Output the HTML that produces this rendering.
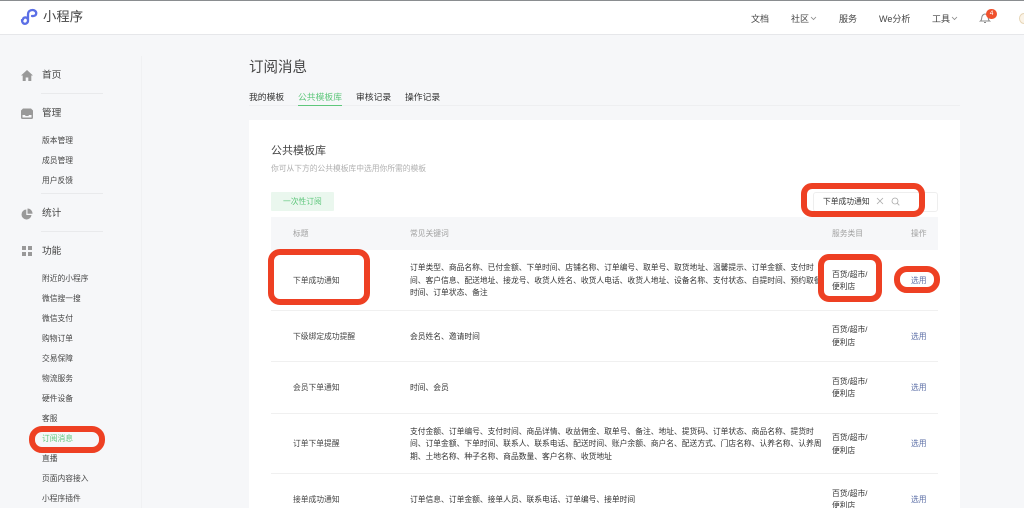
<!DOCTYPE html>
<html lang="zh"><head><meta charset="utf-8"><title>订阅消息</title>
<style>
*{box-sizing:border-box}
html{margin:0;padding:0;background:#f6f7f9;width:1024px;height:508px;overflow:hidden}
body{margin:0;padding:0;width:1024px;height:508px;overflow:hidden;position:relative;background:#f6f7f9;font-family:"Liberation Sans","Noto Sans CJK SC",sans-serif;color:#353535;filter:blur(.3px)}
.a{position:absolute}
.t{position:absolute;white-space:nowrap;line-height:12px;height:12px;margin-top:1px}
.s{font-size:7.75px;color:#444}
.m{font-size:9.7px;color:#444}
.n{font-size:9px;color:#444}
.k{font-size:7.78px;color:#333;left:410px}
.c{font-size:7.78px;color:#333;left:832px}
.o{font-size:7.78px;color:#5b6ea6;left:911px}
.l{font-size:7.78px;color:#444;left:293px}
.h{font-size:7.78px;color:#a0a0a0}
.r{position:absolute;border:6px solid #ee4023;background:transparent}
.d{position:absolute;left:41px;width:62px;height:1px;background:#e9eaec}
.b{position:absolute;left:271px;width:667px;height:1px;background:#f0f0f0}
</style></head><body>
<div class="a" style="left:0;top:0;width:1024px;height:35px;background:#fff;border-top:1px solid #8a8d90;border-bottom:1px solid #e6e7ea"></div>
<svg class="a" style="left:20px;top:8px" width="20" height="18" viewBox="0 0 20 18"><path d="M3 11.500C3 8.800 7.500 8.500 8 12c.3 2.500-1.500 3.800-3 3.800C3 15.800 2 14 2 12M8 12V6.500C8 3.500 10 2 12.500 2c2.500 0 4 2 3.700 3.600C16 7.500 14 8.300 12 8" fill="none" stroke="#5b6fe6" stroke-width="2.300" stroke-linecap="round"/></svg>
<div class="t" style="left:43px;top:10px;font-size:13.300px;color:#444;letter-spacing:.1px">小程序</div>
<div class="t n" style="left:751px;top:12px">文档</div>
<div class="t n" style="left:791px;top:12px">社区</div>
<svg class="a" style="left:810px;top:16px" width="7" height="5"><path d="M1 1l2.500 2.500L6 1" fill="none" stroke="#888" stroke-width=".8"/></svg>
<div class="t n" style="left:839px;top:12px">服务</div>
<div class="t n" style="left:879px;top:12px">We分析</div>
<div class="t n" style="left:932px;top:12px">工具</div>
<svg class="a" style="left:951px;top:16px" width="7" height="5"><path d="M1 1l2.500 2.500L6 1" fill="none" stroke="#888" stroke-width=".8"/></svg>
<svg class="a" style="left:979px;top:12px" width="12" height="12" viewBox="0 0 12 12"><path d="M1.500 9C3 8 2.500 6 3 4.500 3.500 3 5 2 6 2s2.500 1 3 2.500C9.500 6 9 8 10.500 9zM5 10.500h2" fill="none" stroke="#888" stroke-width="1"/></svg>
<div class="a" style="left:986px;top:9px;width:11px;height:10px;border-radius:5px;background:#f0512d;color:#fff;font-size:6.500px;line-height:10px;text-align:center">4</div>
<div class="a" style="left:1019px;top:13px;width:10px;height:11px;border-radius:50%;background:#fbf3e6;border:1px solid #e6d6b8"></div>

<div class="a" style="left:141px;top:56px;width:1px;height:452px;background:#f0f1f3"></div>
<svg class="a" style="left:21px;top:70px" width="12" height="11" viewBox="0 0 12 11"><path d="M6 0L0 5.500h1.700V11h3V7.500h2.600V11h3V5.500H12z" fill="#999"/></svg>
<svg class="a" style="left:21px;top:108px" width="12" height="11" viewBox="0 0 12 11"><path d="M2 .5h8l2 2v7a1.500 1.500 0 0 1-1.500 1.500h-9A1.500 1.500 0 0 1 0 9.500v-7zM1.500 7v2.500h9V7H8l-.6 1H4.600L4 7z" fill="#999"/></svg>
<svg class="a" style="left:21px;top:208px" width="12" height="12" viewBox="0 0 12 12"><path d="M5.300 1.500A5 5 0 1 0 10.500 7H5.300z" fill="#999"/><path d="M6.500 0.500A5 5 0 0 1 11.500 5.800H6.500z" fill="#999"/></svg>
<svg class="a" style="left:22px;top:246px" width="10" height="10"><path d="M0 0h4v4H0zM6 0h4v4H6zM0 6h4v4H0zM6 6h4v4H6z" fill="#999"/></svg>
<div class="t m" style="left:42px;top:69px">首页</div>
<div class="d" style="top:93px"></div>
<div class="t m" style="left:42px;top:107px">管理</div>
<div class="t s" style="left:42px;top:134px">版本管理</div>
<div class="t s" style="left:42px;top:154px">成员管理</div>
<div class="t s" style="left:42px;top:174px">用户反馈</div>
<div class="d" style="top:193px"></div>
<div class="t m" style="left:42px;top:207px">统计</div>
<div class="d" style="top:231px"></div>
<div class="t m" style="left:42px;top:245px">功能</div>
<div class="t s" style="left:42px;top:272px">附近的小程序</div>
<div class="t s" style="left:42px;top:292px">微信搜一搜</div>
<div class="t s" style="left:42px;top:312px">微信支付</div>
<div class="t s" style="left:42px;top:332px">购物订单</div>
<div class="t s" style="left:42px;top:352px">交易保障</div>
<div class="t s" style="left:42px;top:372px">物流服务</div>
<div class="t s" style="left:42px;top:392px">硬件设备</div>
<div class="t s" style="left:42px;top:412px">客服</div>
<div class="t s" style="left:42px;top:432px;color:#5fc77c">订阅消息</div>
<div class="t s" style="left:42px;top:452px">直播</div>
<div class="t s" style="left:42px;top:472px">页面内容接入</div>
<div class="t s" style="left:42px;top:492px">小程序插件</div>
<div class="r" style="left:29px;top:426px;width:76px;height:27px;border-radius:13px"></div>

<div class="t" style="left:249px;top:60px;font-size:14.500px;color:#444;line-height:14px;height:14px">订阅消息</div>
<div class="t" style="left:249px;top:90px;font-size:8.800px;color:#333">我的模板</div>
<div class="t" style="left:298px;top:90px;font-size:8.800px;color:#5fc77c">公共模板库</div>
<div class="t" style="left:356px;top:90px;font-size:8.800px;color:#333">审核记录</div>
<div class="t" style="left:405px;top:90px;font-size:8.800px;color:#333">操作记录</div>
<div class="a" style="left:249px;top:105px;width:711px;height:1px;background:#eeeff1"></div>
<div class="a" style="left:298px;top:105px;width:44px;height:1px;background:#5fc77c"></div>

<div class="a" style="left:249px;top:120px;width:711px;height:388px;background:#fff"></div>
<div class="t" style="left:271px;top:144px;font-size:11px;color:#444">公共模板库</div>
<div class="t" style="left:271px;top:162px;font-size:7.750px;color:#b0b0b0">你可从下方的公共模板库中选用你所需的模板</div>
<div class="a" style="left:271px;top:192px;width:63px;height:19px;background:#eaf7ee;border-radius:1px"></div>
<div class="t" style="left:283px;top:195px;font-size:7.780px;color:#5fc77c">一次性订阅</div>
<div class="a" style="left:813px;top:192px;width:125px;height:20px;border:1px solid #eeeeee;border-radius:3px"></div>
<div class="t" style="left:823px;top:195px;font-size:7.780px;color:#333">下单成功通知</div>
<svg class="a" style="left:876px;top:197px" width="8" height="8"><path d="M1 1l6 6M7 1l-6 6" stroke="#aaa" stroke-width=".8"/></svg>
<svg class="a" style="left:891px;top:197px" width="9" height="9"><circle cx="4" cy="4" r="3" fill="none" stroke="#aaa" stroke-width=".8"/><path d="M6.200 6.200L8.300 8.300" stroke="#aaa" stroke-width=".8"/></svg>

<div class="a" style="left:271px;top:217px;width:667px;height:33px;background:#f6f7f9"></div>
<div class="t h" style="left:293px;top:227px">标题</div>
<div class="t h" style="left:410px;top:227px">常见关键词</div>
<div class="t h" style="left:832px;top:227px">服务类目</div>
<div class="t h" style="left:911px;top:227px">操作</div>

<div class="t l" style="top:274px">下单成功通知</div>
<div class="t k" style="top:261px">订单类型、商品名称、已付金额、下单时间、店铺名称、订单编号、取单号、取货地址、温馨提示、订单金额、支付时</div>
<div class="t k" style="top:274px;width:409px;overflow:hidden">间、客户信息、配送地址、接龙号、收货人姓名、收货人电话、收货人地址、设备名称、支付状态、自提时间、预约取餐</div>
<div class="t k" style="top:286px">时间、订单状态、备注</div>
<div class="t c" style="top:268px">百货/超市/</div>
<div class="t c" style="top:280px">便利店</div>
<div class="t o" style="top:274px">选用</div>
<div class="b" style="top:310px"></div>

<div class="t l" style="top:330px">下级绑定成功提醒</div>
<div class="t k" style="top:330px">会员姓名、邀请时间</div>
<div class="t c" style="top:323px">百货/超市/</div>
<div class="t c" style="top:336px">便利店</div>
<div class="t o" style="top:330px">选用</div>
<div class="b" style="top:361px"></div>

<div class="t l" style="top:381px">会员下单通知</div>
<div class="t k" style="top:381px">时间、会员</div>
<div class="t c" style="top:375px">百货/超市/</div>
<div class="t c" style="top:387px">便利店</div>
<div class="t o" style="top:381px">选用</div>
<div class="b" style="top:413px"></div>

<div class="t l" style="top:437px">订单下单提醒</div>
<div class="t k" style="top:425px">支付金额、订单编号、支付时间、商品详情、收益佣金、取单号、备注、地址、提货码、订单状态、商品名称、提货时</div>
<div class="t k" style="top:437px">间、订单金额、下单时间、联系人、联系电话、配送时间、账户余额、商户名、配送方式、门店名称、认养名称、认养周</div>
<div class="t k" style="top:450px">期、土地名称、种子名称、商品数量、客户名称、收货地址</div>
<div class="t c" style="top:431px">百货/超市/</div>
<div class="t c" style="top:444px">便利店</div>
<div class="t o" style="top:437px">选用</div>
<div class="b" style="top:473px"></div>

<div class="t l" style="top:493px">接单成功通知</div>
<div class="t k" style="top:493px">订单信息、订单金额、接单人员、联系电话、订单编号、接单时间</div>
<div class="t c" style="top:487px">百货/超市/</div>
<div class="t c" style="top:499px">便利店</div>
<div class="t o" style="top:493px">选用</div>

<div class="r" style="left:801px;top:183px;width:124px;height:34px;border-radius:11px"></div>
<div class="r" style="left:268px;top:249px;width:102px;height:56px;border-radius:12px"></div>
<div class="r" style="left:818px;top:254px;width:64px;height:48px;border-radius:11px"></div>
<div class="r" style="left:894px;top:266px;width:46px;height:27px;border-radius:13px"></div>
</body></html>
